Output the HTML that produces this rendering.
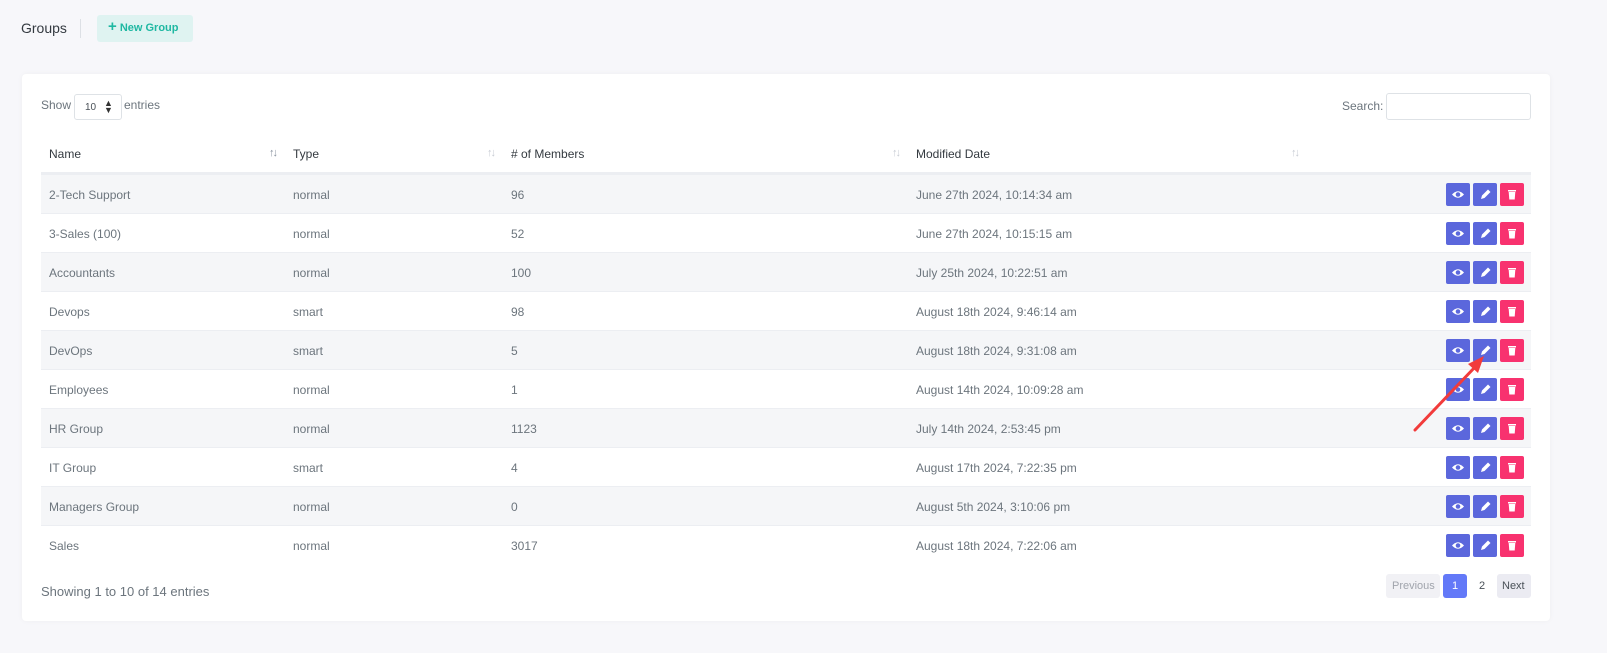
<!DOCTYPE html><html><head><style>
*{box-sizing:border-box;margin:0;padding:0}
body{width:1607px;height:653px;background:#f7f7fa;font-family:"Liberation Sans",sans-serif;color:#6c757d;position:relative;overflow:hidden}
.t{position:absolute;white-space:nowrap}
.card{position:absolute;left:22px;top:74px;width:1528px;height:547px;background:#fff;border-radius:4px;box-shadow:0 0 6px rgba(0,0,0,.04)}
.row{position:absolute;left:41px;width:1490px;height:39px;border-top:1px solid #eceef2;font-size:12px;color:#6c757d}
.row.s{background:#f5f6f8}
.row span{position:absolute;top:13px}
.b{position:absolute;top:8px;width:24px;height:23px;border-radius:2px}
.si{position:absolute;top:147px;font-size:11px;color:#c8ccd4;letter-spacing:-2px}
</style></head><body>
<div class="t" style="left:21px;top:20px;font-size:14px;color:#343a40">Groups</div>
<div style="position:absolute;left:80px;top:19px;width:1px;height:19px;background:#dde0e5"></div>
<div style="position:absolute;left:97px;top:15px;width:96px;height:27px;background:#dff3f1;border-radius:3px;color:#1fb8a2;font-size:11px;font-weight:bold;padding:6px 0 0 11px"><span style="font-size:15px;line-height:11px">+</span> New Group</div>
<div class="card"></div>
<div class="t" style="left:41px;top:98px;font-size:12px">Show</div>
<div style="position:absolute;left:74px;top:94px;width:48px;height:26px;border:1px solid #dee2e6;border-radius:3px;font-size:10px;color:#495057;padding:7px 0 0 10px">10 <span style="position:absolute;left:29px;top:5px;font-size:9px;line-height:7px;color:#333">▲<br>▼</span></div>
<div class="t" style="left:124px;top:98px;font-size:12px">entries</div>
<div class="t" style="left:1342px;top:99px;font-size:12px">Search:</div>
<div style="position:absolute;left:1386px;top:93px;width:145px;height:27px;border:1px solid #dee2e6;border-radius:3px"></div>
<div class="t" style="left:49px;top:147px;font-size:12px;color:#343a40">Name</div>
<div class="t" style="left:293px;top:147px;font-size:12px;color:#343a40">Type</div>
<div class="t" style="left:511px;top:147px;font-size:12px;color:#343a40">Name</div>
<div class="t" style="left:511px;top:147px;font-size:12px;color:#343a40;background:#fff"># of Members</div>
<div class="t" style="left:916px;top:147px;font-size:12px;color:#343a40">Modified Date</div>
<div class="si" style="left:269px;color:#8a93a0">↑↓</div><div class="si" style="left:487px">↑↓</div><div class="si" style="left:892px">↑↓</div><div class="si" style="left:1291px">↑↓</div>
<div style="position:absolute;left:41px;top:172px;width:1490px;height:2px;background:#eceef2"></div>
<div id="rows"></div>
<div class="t" style="left:41px;top:584px;font-size:13px">Showing 1 to 10 of 14 entries</div>
<div style="position:absolute;left:1386px;top:574px;width:54px;height:24px;background:#f1f1f5;border-radius:3px;font-size:11px;color:#a0a4ac;padding:6px 0 0 6px">Previous</div>
<div style="position:absolute;left:1443px;top:574px;width:24px;height:24px;background:#6379f8;border-radius:3px;font-size:11px;color:#fff;padding:6px 0 0 9px">1</div>
<div class="t" style="left:1479px;top:580px;font-size:11px;color:#495057">2</div>
<div style="position:absolute;left:1497px;top:574px;width:34px;height:24px;background:#ebebf2;border-radius:3px;font-size:11px;color:#495057;padding:6px 0 0 5px">Next</div>
<svg style="position:absolute;left:0;top:0" width="1607" height="653"><line x1="1415" y1="430" x2="1476" y2="366" stroke="#f23b3b" stroke-width="3" stroke-linecap="round"/><polygon points="1484,356 1468,364 1478,373" fill="#f23b3b"/></svg>
<script>
var d=[["2-Tech Support","normal","96","June 27th 2024, 10:14:34 am"],["3-Sales (100)","normal","52","June 27th 2024, 10:15:15 am"],["Accountants","normal","100","July 25th 2024, 10:22:51 am"],["Devops","smart","98","August 18th 2024, 9:46:14 am"],["DevOps","smart","5","August 18th 2024, 9:31:08 am"],["Employees","normal","1","August 14th 2024, 10:09:28 am"],["HR Group","normal","1123","July 14th 2024, 2:53:45 pm"],["IT Group","smart","4","August 17th 2024, 7:22:35 pm"],["Managers Group","normal","0","August 5th 2024, 3:10:06 pm"],["Sales","normal","3017","August 18th 2024, 7:22:06 am"]];
var h="";
var eye='<svg width="24" height="23"><path d="M6 11.5Q12 5 18 11.5Q12 18 6 11.5Z" fill="#fff"/><circle cx="12" cy="11.5" r="2.3" fill="#5b67dc"/></svg>';
var pen='<svg width="24" height="23"><path d="M8 16l1-3.5 6-6 2.5 2.5-6 6z" fill="#fff"/></svg>';
var tr='<svg width="24" height="23"><rect x="8" y="7" width="8" height="1.5" fill="#fff"/><path d="M8.7 9h6.6l-.6 7.5h-5.4z" fill="#fff"/></svg>';
d.forEach(function(r,i){h+='<div class="row'+(i%2==0?' s':'')+'" style="top:'+(174+i*39)+'px"><span style="left:8px">'+r[0]+'</span><span style="left:252px">'+r[1]+'</span><span style="left:470px">'+r[2]+'</span><span style="left:875px">'+r[3]+'</span><div class="b" style="left:1405px;background:#5b67dc">'+eye+'</div><div class="b" style="left:1432px;background:#5b67dc">'+pen+'</div><div class="b" style="left:1459px;background:#f8326f">'+tr+'</div></div>'});
document.getElementById("rows").innerHTML=h;
</script>
</body></html>
